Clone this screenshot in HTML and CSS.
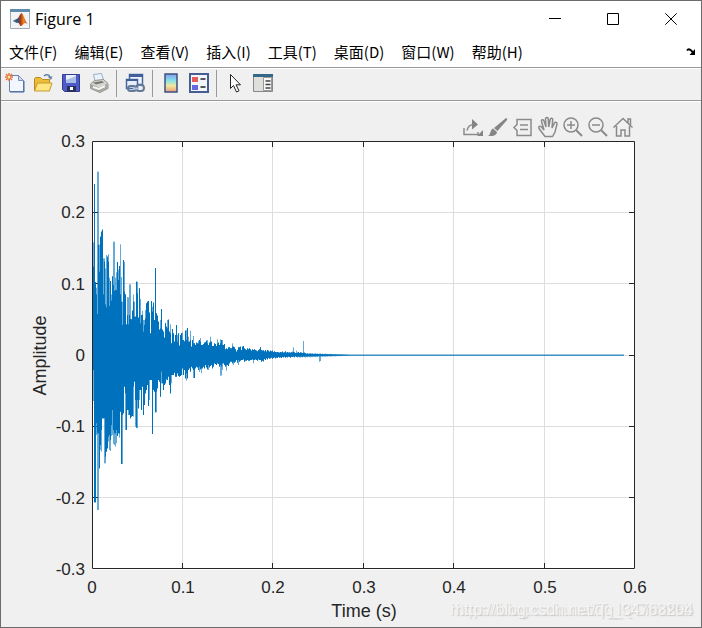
FILE: index.html
```html
<!DOCTYPE html>
<html lang="zh-CN">
<head>
<meta charset="utf-8">
<title>Figure 1</title>
<link rel="stylesheet" href="styles.css">
</head>
<body>
<div class="window">
  <header class="titlebar">
    <svg class="app-icon" viewBox="0 0 20 20" aria-hidden="true">
      <defs><linearGradient id="flame" x1="0" x2="1"><stop offset="0" stop-color="#4b86c0"/><stop offset=".35" stop-color="#2b5273"/><stop offset=".55" stop-color="#b83a12"/><stop offset=".75" stop-color="#f08a24"/><stop offset="1" stop-color="#b5320c"/></linearGradient></defs>
      <path fill="#f3f4f5" stroke="#a2abb2" d="M.5.5h19v19H.5z"/><path fill="#5d8cae" d="M0 0h20v3H0z"/>
      <path fill="url(#flame)" d="M2.500 12l4.500-2.200c2-.6 2.500-4.800 4.600-5.800 2 1 3.400 8 6 11-2-1.500-3-1.500-4.300.2-1 1-1.700 1.800-3 1.800-1-2-1.500-3.600-3.300-3z"/>
    </svg>
    <h1 class="title">Figure 1</h1>
    <div class="controls">
      <button type="button" class="control" aria-label="Minimize"><svg viewBox="0 0 12 12"><path d="M0 5.500h12"/></svg></button>
      <button type="button" class="control" aria-label="Maximize"><svg viewBox="0 0 12 12"><path d="M.5.5h11v11H.5z"/></svg></button>
      <button type="button" class="control" aria-label="Close"><svg viewBox="0 0 12 12"><path d="M.3.3l11.400 11.400M11.700.3L.3 11.700"/></svg></button>
    </div>
  </header>

  <nav class="menubar">
    <button type="button">文件(F)</button>
    <button type="button">编辑(E)</button>
    <button type="button">查看(V)</button>
    <button type="button">插入(I)</button>
    <button type="button">工具(T)</button>
    <button type="button">桌面(D)</button>
    <button type="button">窗口(W)</button>
    <button type="button">帮助(H)</button>
    <button type="button" class="dock" aria-label="Dock figure"><svg viewBox="0 0 10 8"><path fill="none" stroke="#000" stroke-width="2" d="M1 2.500C2.500.5 4.500 1 7 4.500"/><path d="M9 1v6H3.500z"/></svg></button>
  </nav>

  <div class="toolbar">
    <button type="button" aria-label="New figure"><svg viewBox="0 0 20 20">
      <path fill="#f2f7ff" stroke="#6484b6" d="M4.500 2.500h9l5 5v11h-14z"/><path fill="#cddcf3" stroke="#7790bc" d="M13.500 2.500v5h5z"/><path fill="none" stroke="#46679e" d="M5 19h14V8"/>
      <path stroke="#e2733d" stroke-width="1.500" d="M0 4h8M4 0v8M1 1l6 6M7 1L1 7"/><circle cx="4" cy="4" r="1.500" fill="#ffe1a0"/></svg></button>
    <button type="button" aria-label="Open"><svg viewBox="0 0 20 20">
      <path fill="#edbd39" stroke="#b88a24" d="M1.500 17.500v-12l1-1h5l2 2h7v11z"/><path fill="#ffe681" stroke="#c69930" d="M1.500 18l3-8h14.500l-2.500 8z"/><path fill="none" stroke="#6483a6" stroke-width="1.500" d="M11 3c2-2 5-1.500 6 1"/><path fill="#6483a6" d="M14.500 3.500h5L18 7z"/></svg></button>
    <button type="button" aria-label="Save"><svg viewBox="0 0 20 20">
      <path fill="#4e5ac5" stroke="#343d91" d="M1.500 1.500h17v17h-15l-2-2z"/><path fill="#e9effc" d="M5 2h10v8H5z"/><path fill="#a9bce5" d="M5 7l10-4v7H5z"/><path fill="#28315d" d="M6 13h9v6H6z"/><path fill="#fff" d="M9 14h3v3H9z"/></svg></button>
    <button type="button" aria-label="Print"><svg viewBox="0 0 20 20">
      <path fill="#e9f3ff" stroke="#9eaec2" d="M4.500 1.500l8-1 3 9-9 1z"/><path fill="#d6d6d0" stroke="#92928d" d="M1.500 11l4-3.500 9-1 4.500 4v5l-8 4-9.500-4z"/><path fill="#a6a6a1" d="M1.500 11l9 3.500 8-4v5l-7.500 4-9.500-4z"/><path fill="#777" d="M4 9.500l9-1.500 2 1.500-8 2z"/><path fill="none" stroke="#f5f5f2" stroke-width="2" d="M4 14l6 2 6-3"/></svg></button>
    <span class="separator"></span>
    <button type="button" aria-label="Link plot"><svg viewBox="0 0 20 20">
      <path fill="#eef3fb" stroke="#4c699f" stroke-width="1.500" d="M4.500 1.500h13v10h-13z"/><path fill="#405e99" d="M4 1h14v3H4z"/><path fill="#e8eef8" stroke="#4c699f" stroke-width="1.500" d="M1.500 6.500h11v9h-11z"/><path fill="#405e99" d="M1 6h12v2H1z"/>
      <g fill="none" stroke="#637997" stroke-width="2"><rect x="3" y="13" width="8" height="5" rx="2.500"/><rect x="11" y="12" width="8" height="6" rx="3"/><path stroke="#b0c3dc" d="M8 15.500h6"/></g></svg></button>
    <span class="separator"></span>
    <button type="button" aria-label="Insert colorbar"><svg viewBox="0 0 20 20">
      <defs><linearGradient id="spectrum" x2="0" y2="1"><stop stop-color="#8b9be9"/><stop offset=".35" stop-color="#83e0ec"/><stop offset=".65" stop-color="#eee99e"/><stop offset="1" stop-color="#ee997d"/></linearGradient></defs><path fill="url(#spectrum)" stroke="#3d5180" stroke-width="1.500" d="M4 1h12v18H4z"/></svg></button>
    <button type="button" aria-label="Insert legend"><svg viewBox="0 0 20 20">
      <path fill="#f2f5fc" stroke="#465d91" stroke-width="2" d="M1 1h18v18H1z"/><path fill="#e35c5a" d="M3 4h6v5H3z"/><path fill="#6767df" d="M3 12h6v5H3z"/><path stroke="#222" stroke-width="1.500" d="M11.500 6h5M11.500 14h5"/></svg></button>
    <span class="separator"></span>
    <button type="button" aria-label="Edit plot"><svg viewBox="0 0 20 20">
      <path fill="#fff" stroke="#222" d="M5.500 1.500v14l3-3 3 6.500 2.500-1.200-3-6h4.500z"/></svg></button>
    <button type="button" aria-label="Property inspector"><svg viewBox="0 0 20 20">
      <path fill="#dededb" stroke="#888" d="M.5 1.500h19v17H.5z"/><path fill="#356789" d="M0 1h20v3H0z"/><path fill="#f7f7f7" stroke="#999" d="M10.500 4.500h8v13h-8z"/><path stroke="#444" stroke-width="1.500" d="M12.500 8h5M12.500 11.500h5M12.500 15h5"/></svg></button>
  </div>

  <main class="figure">
    <div class="axes-tools">
      <button type="button" aria-label="Export"><svg viewBox="0 0 22 22"><path d="M2 12v6.500h14V16M5 14.500c1-5 4-6 7-6"/><path class="solid" d="M10 3l6 5.500-6 5zM21 14v6h-6z"/></svg></button>
      <button type="button" aria-label="Brush data"><svg viewBox="0 0 22 22"><path class="solid" d="M19 2c1 0 1.500 1 1 2l-9.500 11-3.500-3zM6 12.500l4 3.500c-.5 3.500-4 4.500-9 4 2-1 1.500-2 2.500-4 .8-2 1-3 2.500-3.500z"/></svg></button>
      <button type="button" aria-label="Data tips"><svg viewBox="0 0 22 22"><path d="M5 3.500h14v16H5v-5l-3-3 3-3zM8 9h8M8 13.500h8"/></svg></button>
      <button type="button" aria-label="Pan"><svg viewBox="0 0 22 22"><path d="M8 20.500l-6-8c-1-2 1-3 2.500-1.500L7 14 4.500 5.500C4 3.500 6.500 3 7 5l2 6-.5-8c0-2 2.700-2 2.800 0l.4 8 1.500-7.500c.5-2 2.800-1.500 2.500.5L15 12l2.500-5c1-1.500 3-.5 2.500 1l-2 8-2.500 4.500z"/></svg></button>
      <button type="button" aria-label="Zoom in"><svg viewBox="0 0 22 22"><circle cx="9" cy="9" r="7"/><path d="M5 9h8M9 5v8"/><path stroke-width="2" d="M14 14l6 6"/></svg></button>
      <button type="button" aria-label="Zoom out"><svg viewBox="0 0 22 22"><circle cx="9" cy="9" r="7"/><path d="M5 9h8"/><path stroke-width="2" d="M14 14l6 6"/></svg></button>
      <button type="button" aria-label="Restore view"><svg viewBox="0 0 22 22"><path d="M1.500 11.500L11 2.500l9.500 9M16 7V3h2.500v6M4.500 10v10h4.500v-6h4v6h4.500V10"/></svg></button>
    </div>
    <svg class="plot" viewBox="1 139 700 486" role="img" aria-label="Amplitude over time">
      <path fill="#fff" d="M92 141h543v429H92z"/>
      <path class="grid" d="M182.500 142v427M272.500 142v427M363.500 142v427M453.500 142v427M544.500 142v427M93 212.500h541M93 283.500h541M93 355.500h541M93 426.500h541M93 497.500h541"/>
      <path class="axis" d="M92.500 141.500h542v427h-542zM182.500 142v5M272.500 142v5M363.500 142v5M453.500 142v5M544.500 142v5M182.500 568v-5M272.500 568v-5M363.500 568v-5M453.500 568v-5M544.500 568v-5M93 212.500h5M93 283.500h5M93 355.500h5M93 426.500h5M93 497.500h5M634 212.500h-5M634 283.500h-5M634 355.500h-5M634 426.500h-5M634 497.500h-5"/>
      <path id="peaks" class="wave peaks"/>
      <path id="body" class="wave"/>
      <g class="ticks y-ticks"><text x="85" y="147">0.3</text><text x="85" y="218">0.2</text><text x="85" y="290">0.1</text><text x="85" y="361">0</text><text x="85" y="432">-0.1</text><text x="85" y="504">-0.2</text><text x="85" y="575">-0.3</text></g>
      <g class="ticks x-ticks"><text x="92" y="593">0</text><text x="183" y="593">0.1</text><text x="273" y="593">0.2</text><text x="364" y="593">0.3</text><text x="454" y="593">0.4</text><text x="545" y="593">0.5</text><text x="635" y="593">0.6</text></g>
      <text class="axis-label" x="364" y="617">Time (s)</text>
      <text class="axis-label" transform="translate(46 355.500) rotate(-90)">Amplitude</text>
    </svg>
    <div class="watermark"><span>https://blog.csdn.net/T_IQCmatlab</span><span>http://blog.csdn.net/qq_34763204</span></div>
  </main>
</div>
<script src="wave.js"></script>
</body>
</html>
```
FILE: styles.css
```css
* { box-sizing: border-box; }
body { margin: 0; background: #f0f0f0; color: #000; font-family: "Open Sans", "Noto Sans CJK SC", sans-serif; }
button { border: 0; padding: 0; background: none; color: inherit; font: inherit; }
svg { display: block; }
.window { min-height: 100vh; display: flex; flex-direction: column; border: 1px solid #6b6b6b; background: #f0f0f0; }
.titlebar { display: flex; align-items: center; height: 36px; padding-left: 9px; background: #fff; }
.app-icon { width: 20px; height: 20px; }
.title { margin: 0 auto 0 5px; font-size: 16px; font-weight: 400; line-height: 20px; }
.controls { display: flex; align-self: stretch; margin-right: 1px; }
.control { display: grid; place-items: center; width: 58px; }
.control svg { width: 12px; height: 12px; fill: none; stroke: #000; }
.menubar { display: flex; align-items: center; gap: 1px; height: 30px; background: #fff; font-family: "Noto Sans CJK SC", sans-serif; font-size: 15px; line-height: 22px; }
.menubar button { padding: 0 8px; white-space: nowrap; }
.menubar .dock { margin-left: auto; padding: 0 5px; }
.dock svg { width: 10px; height: 8px; }
.toolbar { display: flex; align-items: center; gap: 8px; height: 34px; padding: 0 4px 2px; border-top: 1px solid #999; border-bottom: 1px solid #999; background: #f0f0f0; box-shadow: inset 0 1px #fff, 0 1px #fff; }
.toolbar button svg { width: 20px; height: 20px; }
.separator { width: 1px; height: 27px; margin-left: -1px; background: #999; }
.figure { position: relative; flex: 1; }
.axes-tools { display: flex; justify-content: flex-end; gap: 3px; height: 38px; padding: 14px 67px 0 0; }
.axes-tools svg { width: 22px; height: 22px; fill: none; stroke: #8a8a8a; stroke-width: 1.5; }
.axes-tools .solid { fill: #858585; stroke: none; }
.plot { width: 100%; overflow: visible; font-family: "Liberation Sans", sans-serif; fill: #262626; }
.grid { fill: none; stroke: #dedede; }
.axis { fill: none; stroke: #262626; }
.wave { fill: none; stroke: #0072bd; }
.peaks { stroke-opacity: .6; }
.ticks { font-size: 17px; }
.y-ticks { text-anchor: end; }
.x-ticks, .axis-label { text-anchor: middle; }
.axis-label { font-size: 18px; }
.watermark { position: absolute; right: 8px; bottom: 7px; display: grid; justify-items: end; font: 16px/20px "Liberation Sans", sans-serif; color: #f4f4f4; text-shadow: 1px 1px 1px #ccc; white-space: nowrap; }
.watermark span { grid-area: 1 / 1; }
```
FILE: wave.js
```js
// One entry per column: the faint peak, then the solid body after a slash.
// Values are in thirds of a unit from the given origin.
const read = (list, origin) => list.trim().split(/\s+/).map(item => {
  const [peak, body = peak] = item.split('/').map(Number);
  return { peak: origin + peak / 3, body: origin + body / 3 };
});

const upper = [
  ...read(`322/395 147 441 458/478 110/537 110/330 328/410 305 290 284 370/478 370/380 400/508 360/517 365 358/380 428/513 438
    478/497 424 320/450 320/468 428/465 412/465 381 404/435 393 328/478 426/500 500/570 375 380/470 478 568 486/540 487/568
    448/540 448/552 553 527 478/500 500/545 545 440 440/475 548 460 492/565 540 528/540 555/590 555/570 525/550 505 500 498
    533 595 498 515/530 503 555 399 535 542 560 584 555/580 522 584 590 608 564 575 555/580 554 590 568/595 625 582 595 620
    600 570 600/620 595 632 600 594`, 135),
  ...read(`68/90 90 94 62 60/90 54 80/95 95 62/90 110 90 78/100 100 105 98 100 92/100 90 84/95 105 105 102 98 96 92 90/100 105
    98 80/95 95 108 108 100 102 108 88/100 98 105 88/100 90 90/105 105 102 118 115 118 112 112 115 115 100/110 110 112 118
    125 120 112 112 110 120 110 108 115 118 120 115 118 115 118 122 118 120 118 120 122 124 120 118 112 120 122 121 124 120
    125 120 122 125 122 124 122 126 124 126 127 126 127 128 126 127 125 128 127 124 128 126 128 127 128 127
    124/127 112/126 127 129 122/129 128 126 129 127 128 129 93/128 128 130`, 310)
];
const lower = [
  ...read(`153/60 457 457 255/220 480/250 480/250 355 300/285 305/240 205 205 340/205 340/320 305 295 275/260 300/255 303/270
    258/225 255/180 282/240 285/250 290/250 280/240 258 250 263/250 185 342 342/195 190 110 240/130 240 180 195/180 195 205
    200 198 200/110 95 230/150 233 235/150 175 150/120 120 180 110 195 165 130 120 105 168 150/90 90 90 252 120 125 187
    187/125 115 90 95 140 100/65 100 120 105 100 88 90 80 105 130 100/75 75 75 68 80 80 70 78 80 78 75`, 350),
  ...read(`175 195 180 205 212/190 205 180 175 185 170 175 204/180 180/204 175 170 172 180 186/170 178 190/175 175 170 175
    165 172 178 180/165 172 168 165 175 170 160 162 165 160 162 170 197/165 197/170 180/160 160 165 170 182/165 165 168 160
    155 155 160 165/155 158 155 150 158 165/150 155 152 150 150 148 155 152 152 150 152 152 150 150 148 160/150 150 148 150
    152 148 150 150 155 152 154 147 150 145 148 144 146 145 143 146 144 142 145 143 144 141 143 142 144 141 142 140 143 141
    142 140 141 143 140 141 140 142 139 141`, 310)
];

const start = 93;
const end = 624;
let peaks = '';
let body = '';
for (let x = start; x < end; x++) {
  const i = x - start;
  const fade = Math.max(0, (350 - x) / 45);
  const ripple = (i * 7 % 5) / 5;
  const top = upper[i] || { peak: 354.6 - fade * (1 + ripple), body: 354.8 - fade };
  const bottom = lower[i] || { peak: 355.8 + fade * (1 + ripple), body: 355.5 + fade };
  const dip = x === 319 ? 5 : x === 320 ? 4 : 0;
  peaks += `M${x + 0.5} ${top.peak}V${bottom.peak + dip}`;
  body += `M${x + 0.5} ${top.body}V${bottom.body}`;
}
document.getElementById('peaks').setAttribute('d', peaks);
document.getElementById('body').setAttribute('d', body);
```
